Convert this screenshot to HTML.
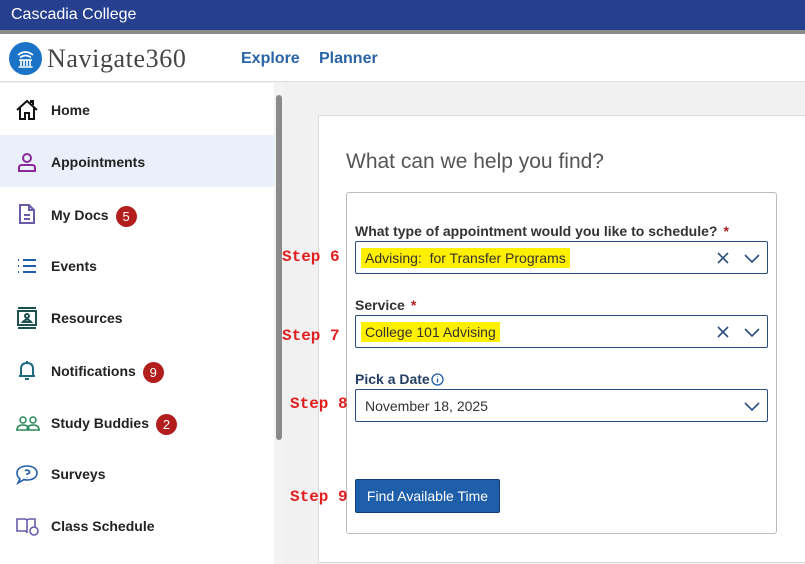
<!DOCTYPE html>
<html><head><meta charset="utf-8"><style>
*{margin:0;padding:0;box-sizing:border-box}
body{width:805px;height:564px;overflow:hidden;font-family:"Liberation Sans",sans-serif;background:#f1f1f1;position:relative}
.top{position:absolute;left:0;top:0;width:805px;height:30px;background:#263f8e;color:#fff;font-size:16px;padding:6px 11px}
.gl{position:absolute;left:0;top:30px;width:805px;height:4px;background:#8a8a8a}
.hdr{position:absolute;left:0;top:34px;width:805px;height:48px;background:#fff;border-bottom:1px solid #ddd}
.logo{position:absolute;left:9px;top:8px;width:33px;height:33px;border-radius:50%;background:#1a73c7}
.brand{position:absolute;left:47px;top:10px;font-family:"Liberation Serif",serif;font-size:26px;color:#444;letter-spacing:0.6px}
.nav{position:absolute;top:16px;font-weight:bold;font-size:16px;color:#2a64a6}
.side{position:absolute;left:0;top:83px;width:274px;height:481px;background:#fff}
.item{position:absolute;left:0;width:274px;height:52px;font-size:14px;font-weight:bold;color:#222}
.item span.t{position:absolute;left:51px;top:19px}
.item svg{position:absolute;left:15px;top:15px}
.badge{display:inline-block;width:21px;height:21px;border-radius:50%;background:#b21e1e;color:#fff;font-weight:normal;font-size:13px;text-align:center;line-height:21px;margin-left:7px;vertical-align:-1px}
.sb{position:absolute;left:274px;top:83px;width:10px;height:481px;background:#f3f3f3}
.thumb{position:absolute;left:276px;top:95px;width:6px;height:345px;background:#8a8a8a;border-radius:3px}
.card{position:absolute;left:318px;top:115px;width:500px;height:448px;background:#fff;border:1px solid #ddd}
.h{position:absolute;left:346px;top:150px;font-size:21px;color:#555}
.box{position:absolute;left:346px;top:192px;width:431px;height:342px;border:1px solid #bbb;border-radius:3px;background:#fff}
.lbl{position:absolute;left:355px;font-size:14px;font-weight:bold;color:#333}
.lbl i{color:#b21e1e;font-style:normal;margin-left:6px}
.sel{position:absolute;left:355px;width:413px;height:33px;border:1px solid #2b4e7e;border-radius:2px;background:#fff}
.sel .v{position:absolute;left:5px;top:6px;font-size:14px;color:#333;background:#ffef00;padding:2px 4px}
.step{position:absolute;font-family:"Liberation Mono",monospace;font-weight:bold;font-size:16px;color:#e02020}
.btn{position:absolute;left:355px;top:479px;width:145px;height:34px;background:#1f5ea8;border:1px solid #0f3e78;border-radius:2px;color:#fff;font-size:14px;text-align:center;line-height:32px}
</style></head><body>
<div class="top">Cascadia College</div><div class="gl"></div>
<div class="hdr">
<div class="logo"><svg width="33" height="33" viewBox="0 0 33 33" fill="none" stroke="#fff" stroke-width="1.6"><path d="M9 13q7.5-6 15 0M11 15.5q5.5-4 11 0M10 18h13M12 18v6M15 18v6M18 18v6M21 18v6M9.5 25h14"/></svg></div>
<div class="brand">Navigate360</div>
<div class="nav" style="left:241px">Explore</div><div class="nav" style="left:319px">Planner</div>
</div>
<div class="side">
<div class="item" style="top:0px"><svg width="24" height="24" viewBox="0 0 24 24" fill="none" stroke="#111" stroke-width="2"><path d="M2 12L12 3l10 9M5 10v11h5v-6h4v6h5V10M16 5v-2h2v4"/></svg><span class="t">Home</span></div>
<div class="item" style="top:52px;background:#e9f0fa"><svg width="24" height="24" viewBox="0 0 24 24" fill="none" stroke="#8a2a9a" stroke-width="2"><circle cx="12" cy="8" r="4"/><path d="M4 21v-3q0-3 3-3h10q3 0 3 3v3z"/></svg><span class="t">Appointments</span></div>
<div class="item" style="top:104px"><svg width="24" height="24" viewBox="0 0 24 24" fill="none" stroke="#6a5aa8" stroke-width="2"><path d="M5 3h9l5 5v13H5zM14 3v5h5M9 13h6M9 17h6"/></svg><span class="t">My Docs<span class="badge">5</span></span></div>
<div class="item" style="top:156px"><svg width="24" height="24" viewBox="0 0 24 24" fill="none" stroke="#1f5ea8" stroke-width="2"><path d="M8 6h13M8 12h13M8 18h13M3 6h1M3 12h1M3 18h1"/></svg><span class="t">Events</span></div>
<div class="item" style="top:208px"><svg width="24" height="24" viewBox="0 0 24 24" fill="none" stroke="#1d5050" stroke-width="2"><path d="M3 2h18M3 22h18M3 5h18v14H3z"/><circle cx="12" cy="10" r="2"/><path d="M8 16q4-5 8 0z"/></svg><span class="t">Resources</span></div>
<div class="item" style="top:260px"><svg width="24" height="24" viewBox="0 0 24 24" fill="none" stroke="#1d6a80" stroke-width="2"><path d="M6 18V11q0-6 6-6t6 6v7zM4 18h16M10 21h4M12 3v2"/></svg><span class="t">Notifications<span class="badge">9</span></span></div>
<div class="item" style="top:312px"><svg width="26" height="24" viewBox="0 0 26 24" fill="none" stroke="#2a8a5a" stroke-width="1.5"><circle cx="8" cy="10" r="3"/><circle cx="18" cy="10" r="3"/><path d="M2 20q0-5 6-5t6 5M12 20q0-5 6-5t6 5M1 20h24"/></svg><span class="t">Study Buddies<span class="badge">2</span></span></div>
<div class="item" style="top:364px"><svg width="24" height="24" viewBox="0 0 24 24" fill="none" stroke="#1f5ea8" stroke-width="1.6"><path d="M12 4c6 0 10 3 10 7s-4 7-10 7q-2 0-3-.5L3 21l2-4q-3-2.5-3-6c0-4 4-7 10-7z"/><path d="M10 9q2-2 4 0t-2 3v1M12 15v.5"/></svg><span class="t">Surveys</span></div>
<div class="item" style="top:416px"><svg width="26" height="24" viewBox="0 0 26 24" fill="none" stroke="#6a5aa8" stroke-width="1.6"><path d="M2 5h7q3 0 3 2v12q0-2-3-2H2zM12 7q0-2 3-2h5v8"/><circle cx="19" cy="17" r="4"/></svg><span class="t">Class Schedule</span></div>
</div>
<div class="sb"></div><div class="thumb"></div>
<div class="card"></div>
<div class="h">What can we help you find?</div>
<div class="box"></div>
<div class="lbl" style="top:223px">What type of appointment would you like to schedule?<i>*</i></div>
<div class="sel" style="top:241px"><span class="v">Advising:&nbsp; for Transfer Programs</span><svg style="position:absolute;left:360px;top:9px" width="50" height="14" fill="none" stroke="#2b4e7e" stroke-width="1.6"><path d="M2 2l10 10M12 2L2 12M29 4l7 7 7-7"/></svg></div>
<div class="lbl" style="top:297px">Service<i>*</i></div>
<div class="sel" style="top:315px"><span class="v">College 101 Advising</span><svg style="position:absolute;left:360px;top:9px" width="50" height="14" fill="none" stroke="#2b4e7e" stroke-width="1.6"><path d="M2 2l10 10M12 2L2 12M29 4l7 7 7-7"/></svg></div>
<div class="lbl" style="top:371px;color:#243f63">Pick a Date<svg width="13" height="13" style="vertical-align:-2px;margin-left:1px" fill="none" stroke="#1f5ea8" stroke-width="1.3"><circle cx="6.5" cy="6.5" r="5.5"/><path d="M6.5 5.5v4M6.5 3.5v.5"/></svg></div>
<div class="sel" style="top:389px"><span class="v" style="background:none">November 18, 2025</span><svg style="position:absolute;left:360px;top:9px" width="50" height="14" fill="none" stroke="#2b4e7e" stroke-width="1.6"><path d="M29 4l7 7 7-7"/></svg></div>
<div class="btn">Find Available Time</div>
<div class="step" style="left:282px;top:248px">Step 6</div>
<div class="step" style="left:282px;top:327px">Step 7</div>
<div class="step" style="left:290px;top:395px">Step 8</div>
<div class="step" style="left:290px;top:488px">Step 9</div>
</body></html>
